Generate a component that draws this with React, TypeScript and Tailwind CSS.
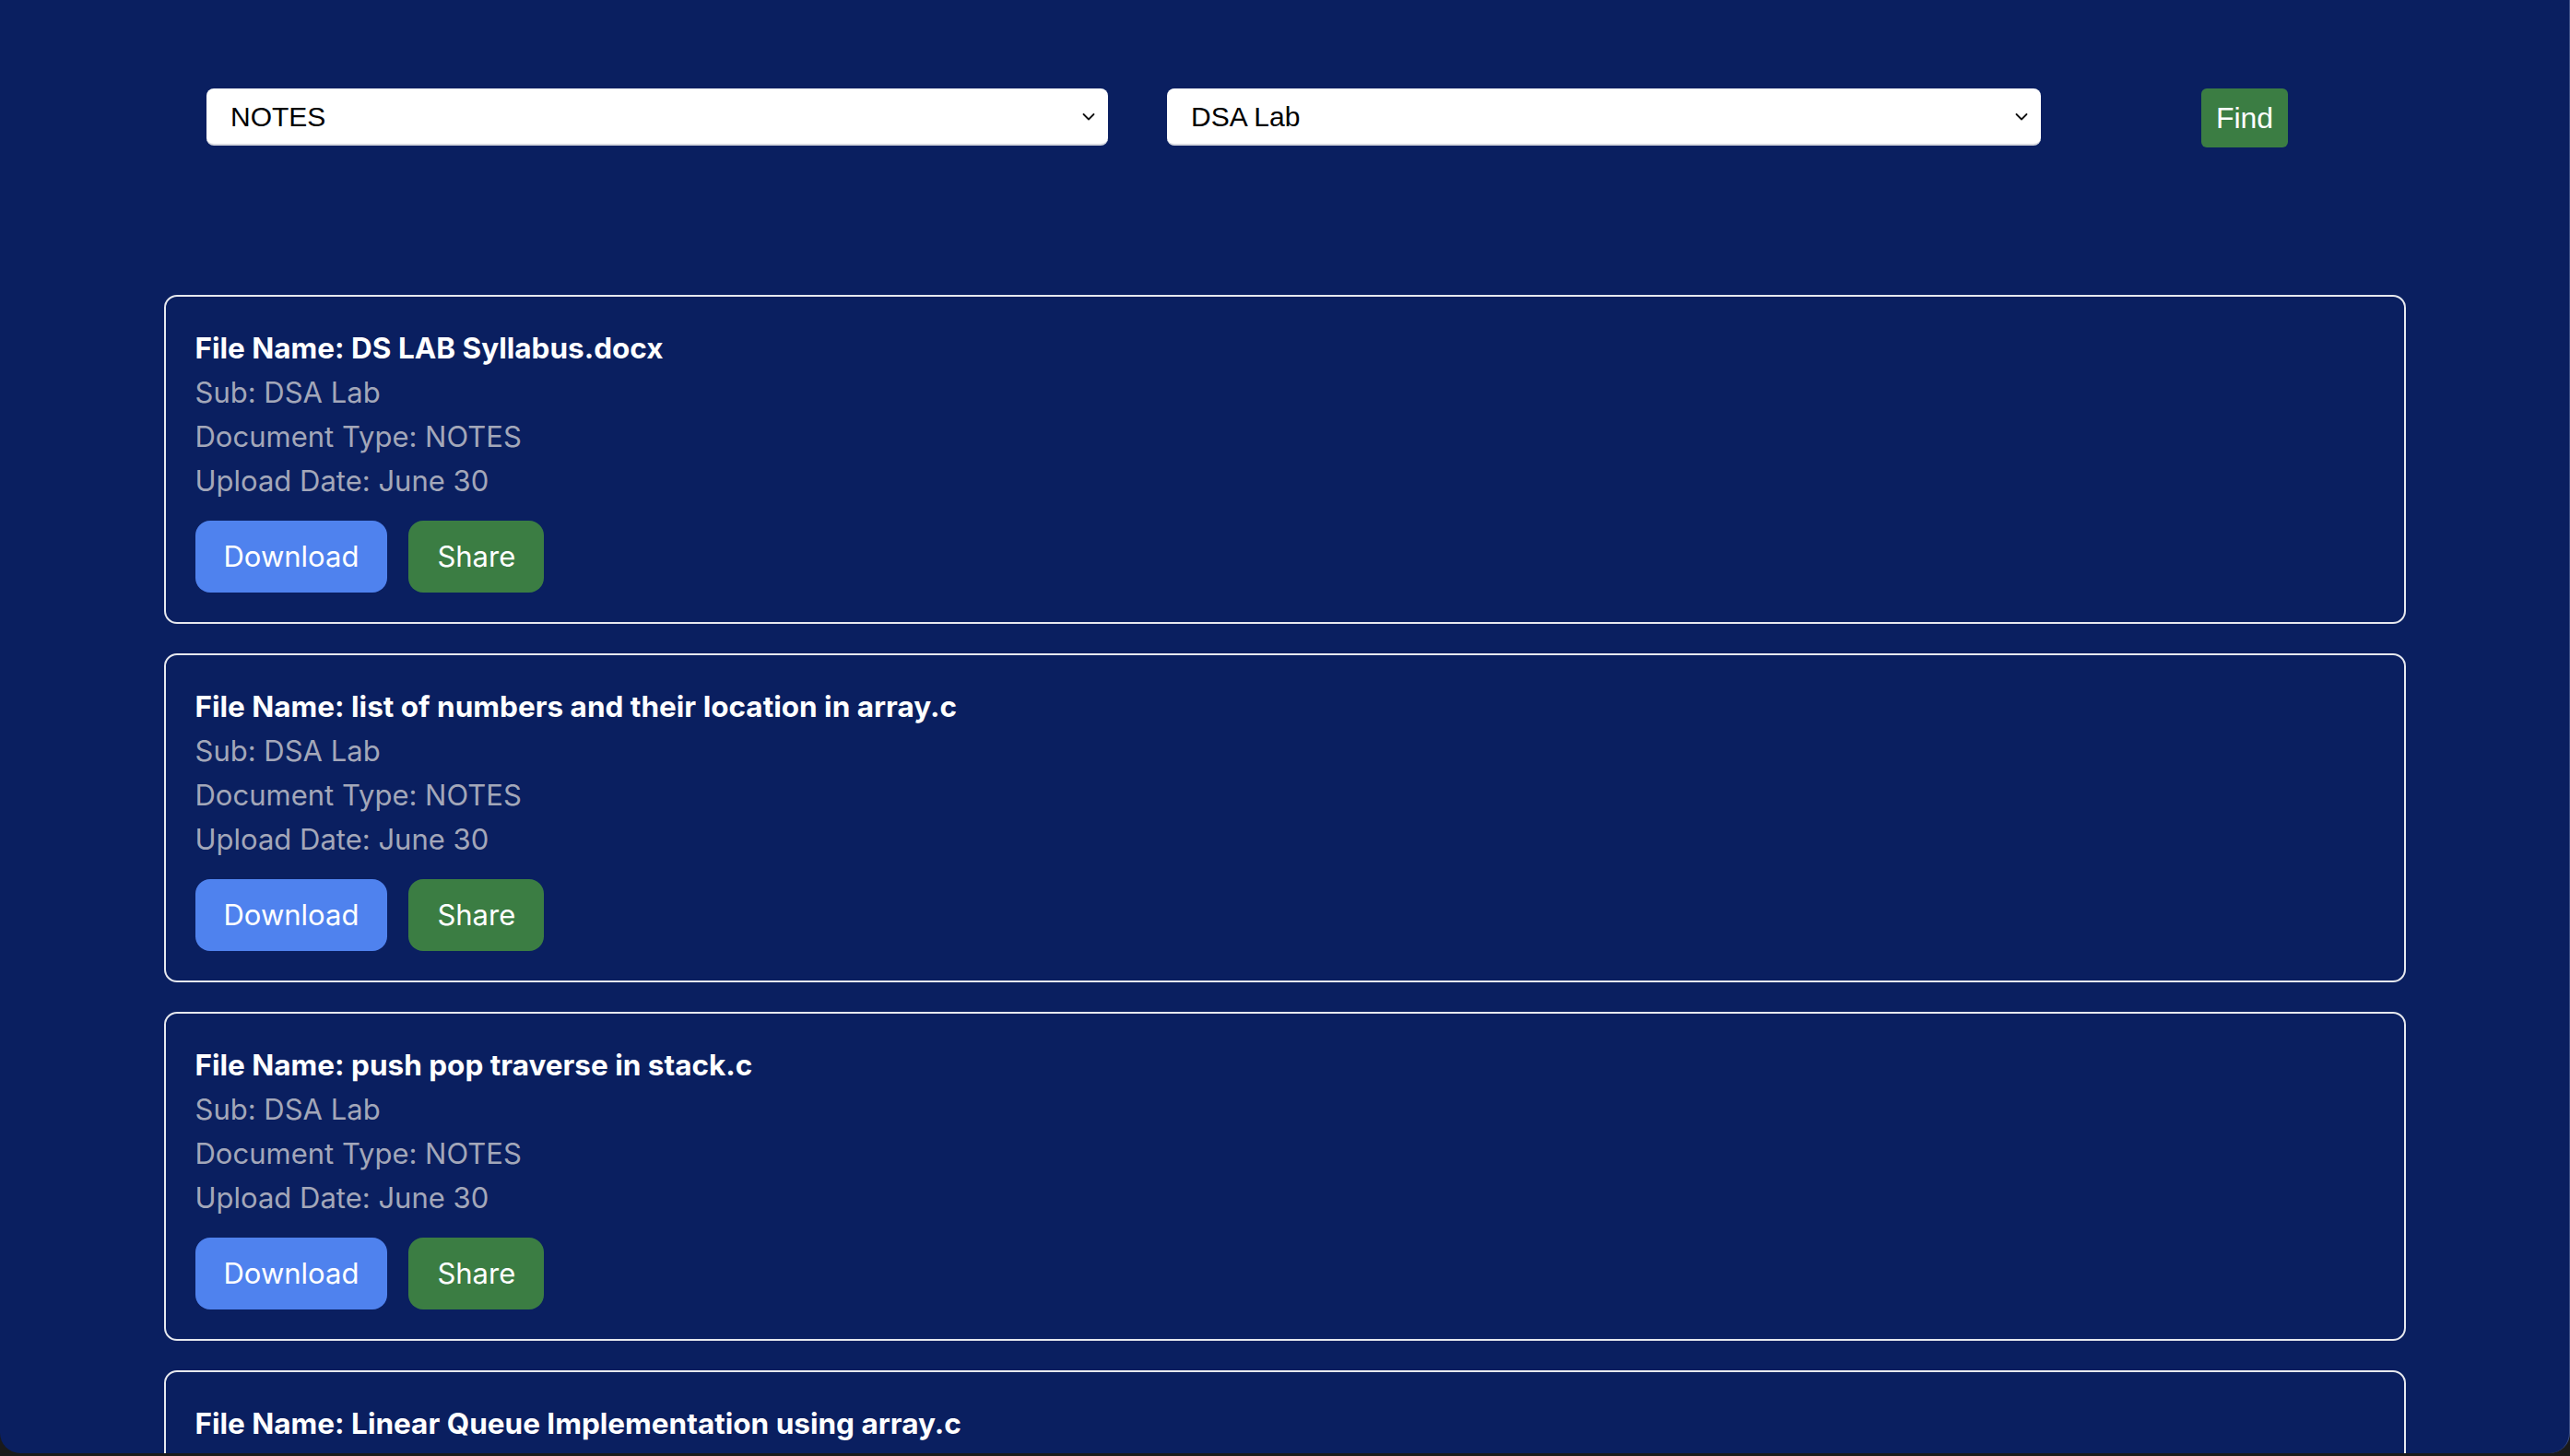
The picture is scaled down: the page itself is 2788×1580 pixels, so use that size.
import { useState } from "react";

const files = [
  "DS LAB Syllabus.docx",
  "list of numbers and their location in array.c",
  "push pop traverse in stack.c",
  "Linear Queue Implementation using array.c",
];

function Chevron() {
  return (
    <svg width="14" height="9" viewBox="0 0 14 9" className="pointer-events-none absolute right-[14px] top-1/2 -translate-y-1/2">
      <path d="M1.5 1.5 L7 7 L12.5 1.5" fill="none" stroke="#111" strokeWidth="1.8" strokeLinecap="round" strokeLinejoin="round" />
    </svg>
  );
}

function Picker({ value, options, width }: { value: string; options: string[]; width: string }) {
  const [v, setV] = useState(value);
  return (
    <div className={`relative ${width}`}>
      <select
        value={v}
        onChange={(e) => setV(e.target.value)}
        className="h-[62px] w-full appearance-none rounded-[8px] border-b-2 border-[#d7d9e0] bg-white pl-[26px] pr-10 text-[30px] text-black outline-none"
        style={{ fontFamily: '"Liberation Sans", Arial, sans-serif' }}
      >
        {options.map((o) => (
          <option key={o}>{o}</option>
        ))}
      </select>
      <Chevron />
    </div>
  );
}

function FileCard({ name }: { name: string }) {
  return (
    <div className="rounded-[14px] border-2 border-[#e6e8ee] px-[32px] pt-[32px] pb-[32px]">
      <p className="text-[31.5px] font-bold leading-[48px] text-white">File Name: {name}</p>
      <p className="text-[31px] leading-[48px] text-[#a3a7b9]">Sub: DSA Lab</p>
      <p className="text-[31px] leading-[48px] text-[#a3a7b9]">Document Type: NOTES</p>
      <p className="text-[31px] leading-[48px] text-[#a3a7b9]">Upload Date: June 30</p>
      <div className="mt-[19px] flex gap-[23px]">
        <button className="h-[78px] rounded-[16px] bg-[#4f82ee] px-[31px] text-[31px] text-white">Download</button>
        <button className="h-[78px] rounded-[16px] bg-[#3b7d43] px-[31px] text-[31px] text-white">Share</button>
      </div>
    </div>
  );
}

export default function App() {
  return (
    <div className="h-[1580px] w-full overflow-hidden bg-[#1a1a1a]">
      <div
        className="h-[1577px] overflow-hidden rounded-b-[22px] border-r border-[#3c4f86] bg-[#0a1f60]"
        style={{ fontFamily: 'Inter, "Noto Sans", sans-serif' }}
      >
        {/* filters */}
        <div className="flex items-start pt-[96px] pl-[224px]">
          <Picker value="NOTES" options={["NOTES", "PYQ", "SYLLABUS"]} width="w-[978px]" />
          <div className="ml-[64px]">
            <Picker value="DSA Lab" options={["DSA Lab", "DSA", "Maths"]} width="w-[948px]" />
          </div>
          <button
            className="ml-[174px] h-[64px] w-[94px] rounded-[6px] bg-[#3b7d43] text-[32px] text-white"
            style={{ fontFamily: '"Liberation Sans", Arial, sans-serif' }}
          >
            Find
          </button>
        </div>

        {/* results */}
        <div className="mx-auto mt-[160px] flex w-[2432px] flex-col gap-[32px]">
          {files.map((f) => (
            <FileCard key={f} name={f} />
          ))}
        </div>
      </div>
    </div>
  );
}
